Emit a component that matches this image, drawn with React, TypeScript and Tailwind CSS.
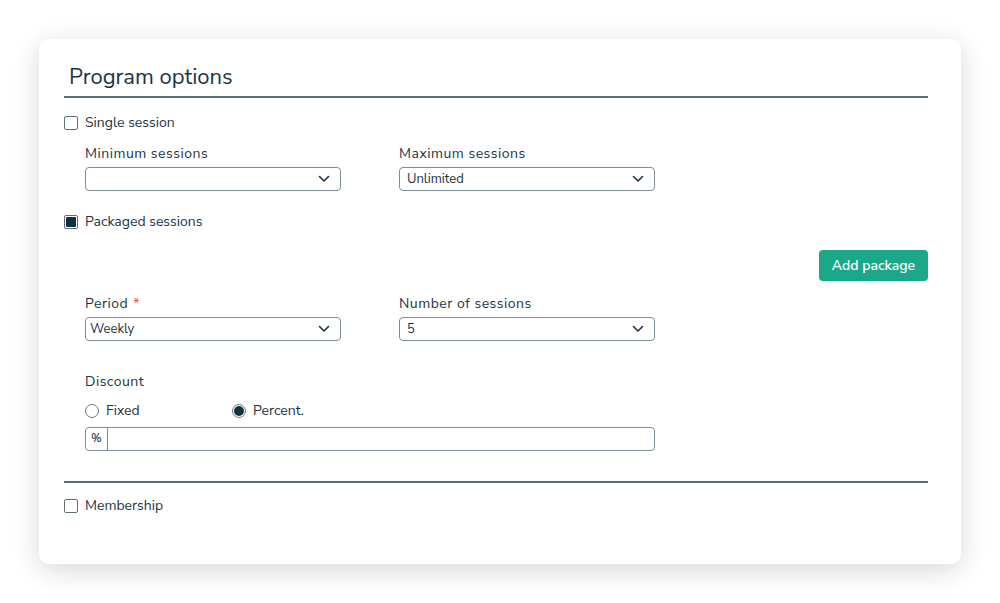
import { useState } from "react";

const ink = "text-[#1c3442]";

function Chevron() {
  return (
    <svg width="12" height="8" viewBox="0 0 12 8" fill="none" className="shrink-0">
      <path d="M1.5 1.5 6 6l4.5-4.5" stroke="#1c3442" strokeWidth="1.6" strokeLinecap="round" strokeLinejoin="round" />
    </svg>
  );
}

function Select({ value, inset = 7 }: { value?: string; inset?: number }) {
  return (
    <div
      className="flex h-[24px] w-[256px] items-center justify-between rounded-[4px] border border-[#7d8e96] bg-white pr-[10px]"
      style={{ paddingLeft: inset }}
    >
      <span className={`text-[13px] leading-[16px] ${ink}`}>{value ?? ""}</span>
      <Chevron />
    </div>
  );
}

function Checkbox({ checked, label }: { checked?: boolean; label: string }) {
  return (
    <div className="flex h-[18px] items-center gap-[7px]">
      <div className="flex h-[14px] w-[14px] items-center justify-center rounded-[2px] border border-[#5f7079] bg-white">
        {checked && <div className="h-[10px] w-[10px] rounded-[1px] bg-[#14303f]" />}
      </div>
      <span className={`text-[14px] leading-[18px] ${ink}`}>{label}</span>
    </div>
  );
}

function Radio({ checked, label }: { checked?: boolean; label: string }) {
  return (
    <div className="flex h-[18px] items-center gap-[7px]">
      <div className="flex h-[14px] w-[14px] items-center justify-center rounded-full border border-[#6b7c85] bg-white">
        {checked && <div className="h-[10px] w-[10px] rounded-full bg-[#14303f]" />}
      </div>
      <span className={`text-[14px] leading-[18px] ${ink}`}>{label}</span>
    </div>
  );
}

function Field({ label, required, value, inset }: { label: string; required?: boolean; value?: string; inset?: number }) {
  return (
    <div className="flex flex-col gap-[4px]">
      <span className={`text-[14px] leading-[18px] tracking-[0.5px] ${ink}`}>
        {label}
        {required && <span className="ml-[5px] text-[#e8504f]">*</span>}
      </span>
      <Select value={value} inset={inset} />
    </div>
  );
}

export default function App() {
  const [pct] = useState("");
  return (
    <div
      className="h-[603px] w-[1000px] bg-white pl-[39px] pt-[39px]"
      style={{ fontFamily: '"Nunito Sans", "Noto Sans", "Liberation Sans", sans-serif' }}
    >
      <div className="h-[525px] w-[922px] rounded-[10px] bg-white pl-[25px] pr-[33px] pt-[24px] shadow-[0_6px_28px_rgba(0,0,0,0.16)]">
        <h1 className={`pl-[5px] text-[22px] leading-[28px] ${ink}`}>Program options</h1>
        <div className="mt-[5px] h-[2px] bg-[#5b6e78]" />

        <div className="mt-[16px]">
          <Checkbox label="Single session" />
        </div>

        <div className="mt-[13px] flex gap-[58px] pl-[21px]">
          <Field label="Minimum sessions" />
          <Field label="Maximum sessions" value="Unlimited" inset={7} />
        </div>

        <div className="mt-[22px]">
          <Checkbox checked label="Packaged sessions" />
        </div>

        <div className="mt-[19px] flex justify-end">
          <button className="h-[31px] rounded-[4px] bg-[#1ba888] px-[13px] text-[14px] font-semibold text-white">
            Add package
          </button>
        </div>

        <div className="mt-[14px] flex gap-[58px] pl-[21px]">
          <Field label="Period" required value="Weekly" inset={4} />
          <Field label="Number of sessions" value="5" inset={7} />
        </div>

        <div className="mt-[32px] pl-[21px]">
          <div className={`text-[14px] leading-[18px] tracking-[0.5px] ${ink}`}>Discount</div>
          <div className="mt-[11px] flex">
            <div className="w-[147px]">
              <Radio label="Fixed" />
            </div>
            <Radio checked label="Percent." />
          </div>
          <div className="mt-[7px] flex h-[24px] w-[570px] items-stretch rounded-[4px] border border-[#7d8e96] bg-white">
            <span className={`flex w-[22px] items-center justify-center border-r border-[#7d8e96] text-[11px] font-semibold ${ink}`}>
              %
            </span>
            <span className="flex-1">{pct}</span>
          </div>
        </div>

        <div className="mt-[30px] h-[2px] bg-[#5b6e78]" />

        <div className="mt-[14px]">
          <Checkbox label="Membership" />
        </div>
      </div>
    </div>
  );
}
